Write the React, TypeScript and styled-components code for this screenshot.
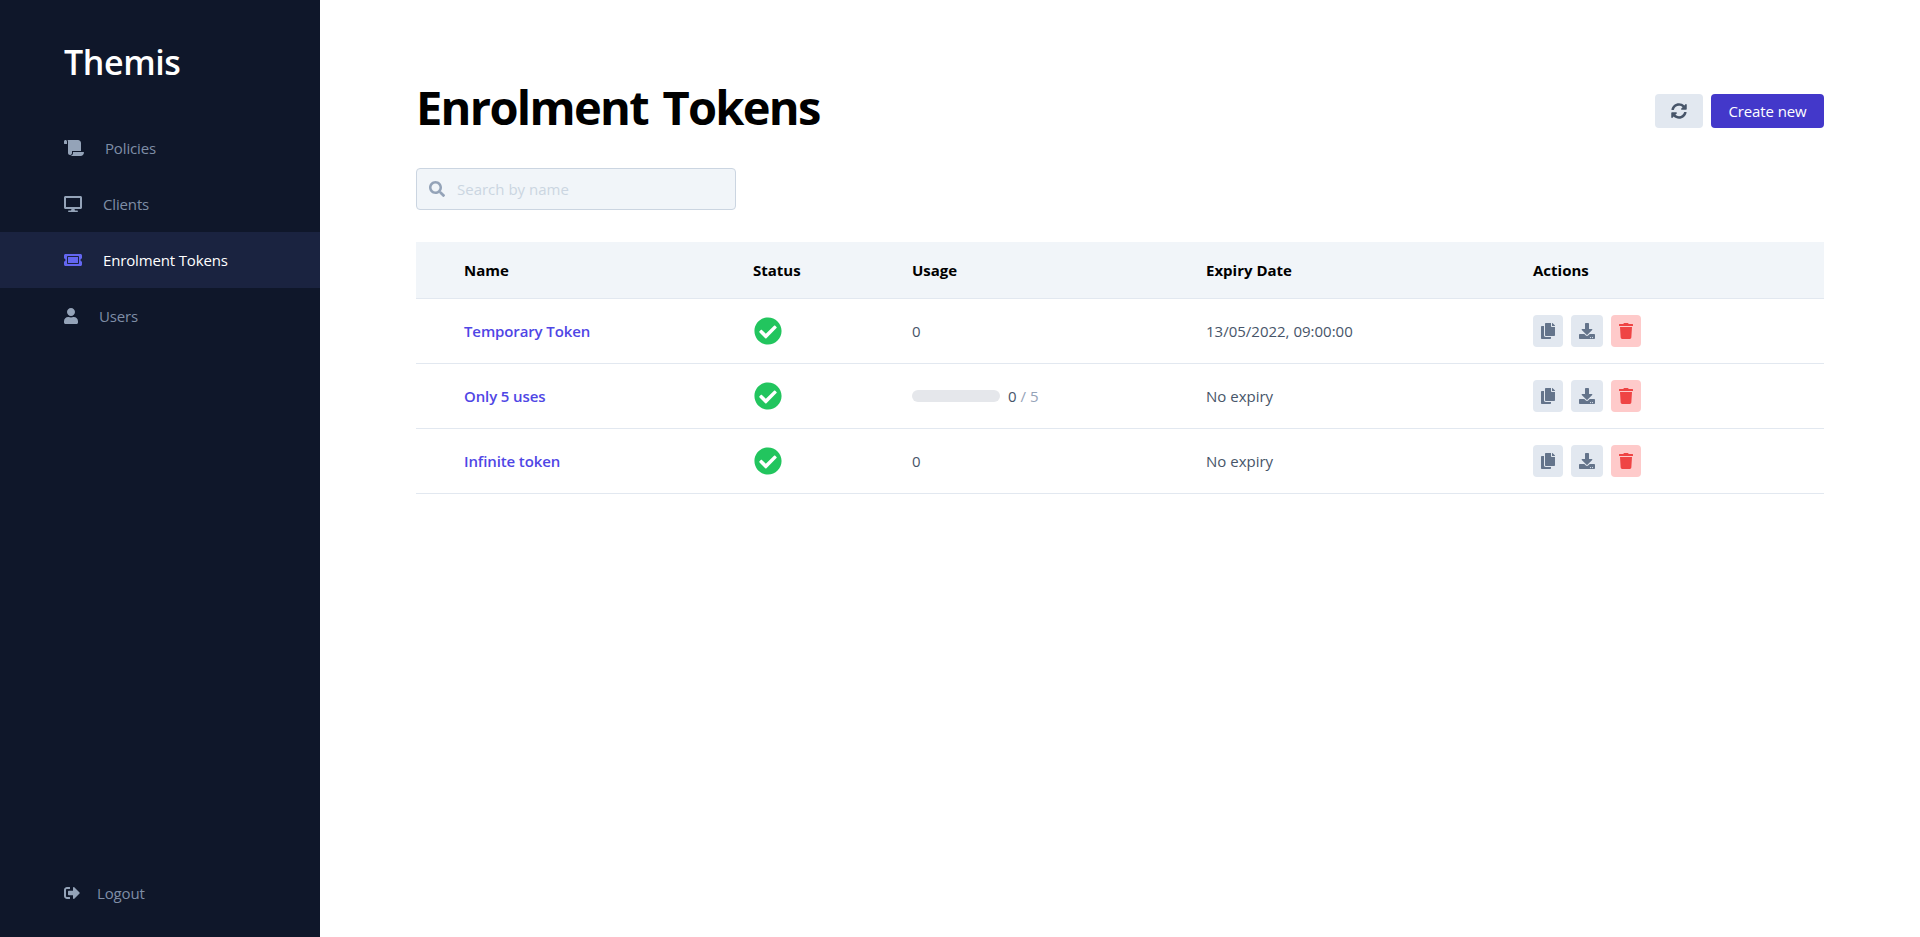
import React from 'react'
import styled, { createGlobalStyle } from 'styled-components'
import {
  FaScroll,
  FaDesktop,
  FaTicketAlt,
  FaUser,
  FaSignOutAlt,
  FaSearch,
  FaSyncAlt,
  FaCheckCircle,
  FaCopy,
  FaDownload,
  FaTrash,
} from 'react-icons/fa'

const GlobalStyle = createGlobalStyle`
  html, body {
    margin: 0;
    padding: 0;
    height: 100%;
    background: #fff;
  }
  body {
    font-family: "Open Sans", "Noto Sans", "Liberation Sans", sans-serif;
  }
  #root {
    height: 100%;
  }
`

const Layout = styled.div`
  display: flex;
  height: 937px;
  overflow: hidden;
`

const Sidebar = styled.aside`
  display: flex;
  flex-direction: column;
  flex: 0 0 320px;
  background: #0f172a;
`

const Brand = styled.div`
  padding: 40px 64px 0;
  height: 84px;
  box-sizing: border-box;
  font-size: 34px;
  line-height: 44px;
  font-weight: 600;
  letter-spacing: -0.4px;
  color: #fff;
`

const Nav = styled.nav`
  display: flex;
  flex-direction: column;
  padding-top: 36px;
  flex: 1;
`

const NavItem = styled.a<{ $active?: boolean; $gap?: number; $iconWidth?: number }>`
  display: flex;
  align-items: center;
  height: 56px;
  padding-left: 64px;
  font-size: 15px;
  letter-spacing: -0.15px;
  text-decoration: none;
  color: ${({ $active }) => ($active ? '#fff' : '#7f8ea6')};
  background: ${({ $active }) => ($active ? '#1a2340' : 'transparent')};

  svg {
    flex-shrink: 0;
    width: ${({ $iconWidth }) => $iconWidth ?? 16}px;
    height: 16px;
    margin-right: ${({ $gap }) => $gap ?? 21}px;
    color: ${({ $active }) => ($active ? '#6366f1' : '#94a3b8')};
  }
`

const LogoutWrap = styled.div`
  padding-bottom: 16px;
`

const Main = styled.main`
  flex: 1;
  padding: 72px 96px 0;
  min-width: 0;
`

const Header = styled.header`
  display: flex;
  justify-content: space-between;
  align-items: flex-start;
`

const Title = styled.h1`
  margin: 0;
  font-size: 47px;
  line-height: 70px;
  font-weight: 700;
  letter-spacing: -1.7px;
  word-spacing: 4px;
  color: #000;
`

const HeaderActions = styled.div`
  display: flex;
  gap: 8px;
  padding-top: 22px;
`

const RefreshButton = styled.button`
  display: flex;
  align-items: center;
  justify-content: center;
  width: 48px;
  height: 34px;
  padding: 0;
  border: 0;
  border-radius: 4px;
  background: #e2e8f0;
  color: #475569;
`

const CreateButton = styled.button`
  width: 113px;
  height: 34px;
  padding: 0;
  border: 0;
  border-radius: 4px;
  background: #4338ca;
  color: #fff;
  font-family: inherit;
  font-size: 15px;
  letter-spacing: -0.1px;
`

const Search = styled.label`
  display: flex;
  align-items: center;
  width: 320px;
  height: 42px;
  margin-top: 26px;
  padding-left: 12px;
  box-sizing: border-box;
  background: #f1f5f9;
  border: 1px solid #cbd5e1;
  border-radius: 4px;
  color: #94a3b8;
`

const SearchInput = styled.input`
  flex: 1;
  min-width: 0;
  margin-left: 12px;
  padding: 0;
  border: 0;
  outline: 0;
  background: transparent;
  font-family: inherit;
  font-size: 15px;
  letter-spacing: 0;

  &::placeholder {
    color: #cbd5e1;
    opacity: 1;
  }
`

const Table = styled.table`
  width: 100%;
  margin-top: 32px;
  border-collapse: collapse;
  table-layout: fixed;
`

const HeadCell = styled.th<{ $width?: number; $first?: boolean }>`
  width: ${({ $width }) => ($width ? `${$width}px` : 'auto')};
  height: 56px;
  padding: 0 0 0 ${({ $first }) => ($first ? 48 : 0)}px;
  box-sizing: border-box;
  background: #f1f5f9;
  border-bottom: 1px solid #e2e8f0;
  text-align: left;
  font-size: 15px;
  font-weight: 700;
  letter-spacing: 0;
  color: #000;
`

const Cell = styled.td<{ $first?: boolean }>`
  height: 65px;
  padding: 0 0 0 ${({ $first }) => ($first ? 48 : 0)}px;
  box-sizing: border-box;
  border-bottom: 1px solid #e2e8f0;
  font-size: 15px;
  letter-spacing: 0;
  color: #475569;
`

const NameLink = styled.a`
  font-weight: 600;
  font-size: 15px;
  letter-spacing: -0.12px;
  color: #4f46e5;
  text-decoration: none;
`

const StatusIcon = styled(FaCheckCircle)`
  display: block;
  margin-left: 1px;
  color: #22c55e;
`

const UsageWrap = styled.div`
  display: flex;
  align-items: center;
`

const UsageBar = styled.div`
  width: 88px;
  height: 12px;
  margin-right: 8px;
  border-radius: 6px;
  background: #e5e7eb;
`

const UsageCount = styled.span`
  color: #475569;
`

const UsageLimit = styled.span`
  color: #94a3b8;
`

const Actions = styled.div`
  display: flex;
  gap: 8px;
`

const ActionButton = styled.button<{ $danger?: boolean; $width?: number }>`
  display: flex;
  align-items: center;
  justify-content: center;
  width: ${({ $width }) => $width ?? 30}px;
  height: 32px;
  padding: 0;
  border: 0;
  border-radius: 4px;
  background: ${({ $danger }) => ($danger ? '#fecaca' : '#e2e8f0')};
  color: ${({ $danger }) => ($danger ? '#ef4444' : '#64748b')};

  svg {
    width: 16px;
    height: 16px;
  }
`

const tokens = [
  { name: 'Temporary Token', usage: '0', limit: null, expiry: '13/05/2022, 09:00:00' },
  { name: 'Only 5 uses', usage: '0', limit: '5', expiry: 'No expiry' },
  { name: 'Infinite token', usage: '0', limit: null, expiry: 'No expiry' },
]

export default function App() {
  return (
    <Layout>
      <GlobalStyle />
      <Sidebar>
        <Brand>Themis</Brand>
        <Nav>
          <NavItem href="#" $iconWidth={20}>
            <FaScroll />
            Policies
          </NavItem>
          <NavItem href="#" $iconWidth={18}>
            <FaDesktop />
            Clients
          </NavItem>
          <NavItem href="#" $active $iconWidth={18}>
            <FaTicketAlt />
            Enrolment Tokens
          </NavItem>
          <NavItem href="#" $iconWidth={14}>
            <FaUser />
            Users
          </NavItem>
        </Nav>
        <LogoutWrap>
          <NavItem href="#" $gap={17}>
            <FaSignOutAlt />
            Logout
          </NavItem>
        </LogoutWrap>
      </Sidebar>
      <Main>
        <Header>
          <Title>Enrolment Tokens</Title>
          <HeaderActions>
            <RefreshButton>
              <FaSyncAlt size={16} />
            </RefreshButton>
            <CreateButton>Create new</CreateButton>
          </HeaderActions>
        </Header>
        <Search>
          <FaSearch size={16} />
          <SearchInput placeholder="Search by name" />
        </Search>
        <Table>
          <thead>
            <tr>
              <HeadCell $first $width={337}>Name</HeadCell>
              <HeadCell $width={159}>Status</HeadCell>
              <HeadCell $width={294}>Usage</HeadCell>
              <HeadCell $width={327}>Expiry Date</HeadCell>
              <HeadCell>Actions</HeadCell>
            </tr>
          </thead>
          <tbody>
            {tokens.map((t) => (
              <tr key={t.name}>
                <Cell $first>
                  <NameLink href="#">{t.name}</NameLink>
                </Cell>
                <Cell>
                  <StatusIcon size={28} />
                </Cell>
                <Cell>
                  <UsageWrap>
                    {t.limit && <UsageBar />}
                    <UsageCount>{t.usage}</UsageCount>
                    {t.limit && <UsageLimit>&nbsp;/ {t.limit}</UsageLimit>}
                  </UsageWrap>
                </Cell>
                <Cell>{t.expiry}</Cell>
                <Cell>
                  <Actions>
                    <ActionButton>
                      <FaCopy />
                    </ActionButton>
                    <ActionButton $width={32}>
                      <FaDownload />
                    </ActionButton>
                    <ActionButton $danger>
                      <FaTrash />
                    </ActionButton>
                  </Actions>
                </Cell>
              </tr>
            ))}
          </tbody>
        </Table>
      </Main>
    </Layout>
  )
}
